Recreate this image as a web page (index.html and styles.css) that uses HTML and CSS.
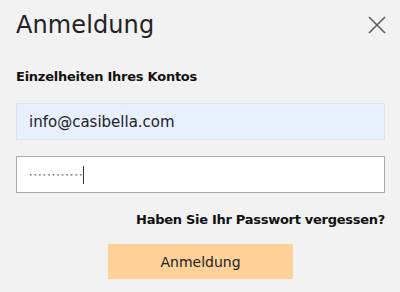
FILE: index.html
```html
<!DOCTYPE html>
<html lang="de">
<head>
<meta charset="utf-8">
<link rel="stylesheet" href="styles.css">
</head>
<body>
<div class="modal">
  <div class="header">
    <h1 class="title">Anmeldung</h1>
    <button class="close" aria-label="Schließen">
      <svg width="18" height="18" viewBox="0 0 18 18"><path d="M1 1L17 17M17 1L1 17" stroke="#5a5a5a" stroke-width="1.6" fill="none"/></svg>
    </button>
  </div>
  <div class="section-label">Einzelheiten Ihres Kontos</div>
  <div class="field email">info@casibella.com</div>
  <div class="field password"><span class="dots">••••••••••••</span><span class="caret"></span></div>
  <div class="forgot-row"><a class="forgot">Haben Sie Ihr Passwort vergessen?</a></div>
  <div class="actions"><button class="submit">Anmeldung</button></div>
</div>
</body>
</html>
```
FILE: styles.css
```css
html, body {
  margin: 0;
  padding: 0;
  background: #f2f2f2;
}
body {
  font-family: "DejaVu Sans", sans-serif;
  color: #1a1a1a;
}
.modal {
  padding: 0 15px 0 16px;
  display: flex;
  flex-direction: column;
}
.header {
  display: flex;
  justify-content: space-between;
  align-items: flex-start;
  height: 52px;
}
.title {
  margin: 0;
  font-weight: 400;
  font-size: 24px;
  line-height: 28px;
  padding-top: 11px;
  color: #222;
  letter-spacing: 0.1px;
}
.close {
  background: none;
  border: none;
  padding: 0;
  margin-top: 16px;
  margin-right: -1px;
  width: 18px;
  height: 18px;
}
.close svg { display: block; }
.section-label {
  font-weight: bold;
  font-size: 13px;
  line-height: 16px;
  margin-top: 17px;
  color: #111;
  letter-spacing: -0.25px;
}
.field {
  box-sizing: border-box;
  height: 37px;
  display: flex;
  align-items: center;
  padding-left: 12px;
  font-size: 15px;
}
.email {
  margin-top: 18px;
  background: #e8f0fe;
  border: 1px solid #dde3ee;
  color: #222;
}
.password {
  margin-top: 16px;
  background: #fff;
  border: 1px solid #a9a9a9;
}
.dots {
  font-size: 6px;
  letter-spacing: 1px;
  color: #777;
}
.caret {
  width: 1px;
  height: 18px;
  background: #333;
  margin-left: 0;
}
.forgot-row {
  display: flex;
  justify-content: flex-end;
  margin-top: 19px;
}
.forgot {
  font-weight: bold;
  font-size: 13px;
  line-height: 16px;
  color: #111;
  letter-spacing: -0.28px;
}
.actions {
  margin-top: 16px;
  padding-left: 92px;
}
.submit {
  width: 185px;
  height: 35px;
  background: #fdd198;
  border: none;
  font-family: "DejaVu Sans", sans-serif;
  font-size: 14px;
  color: #222;
}
```
